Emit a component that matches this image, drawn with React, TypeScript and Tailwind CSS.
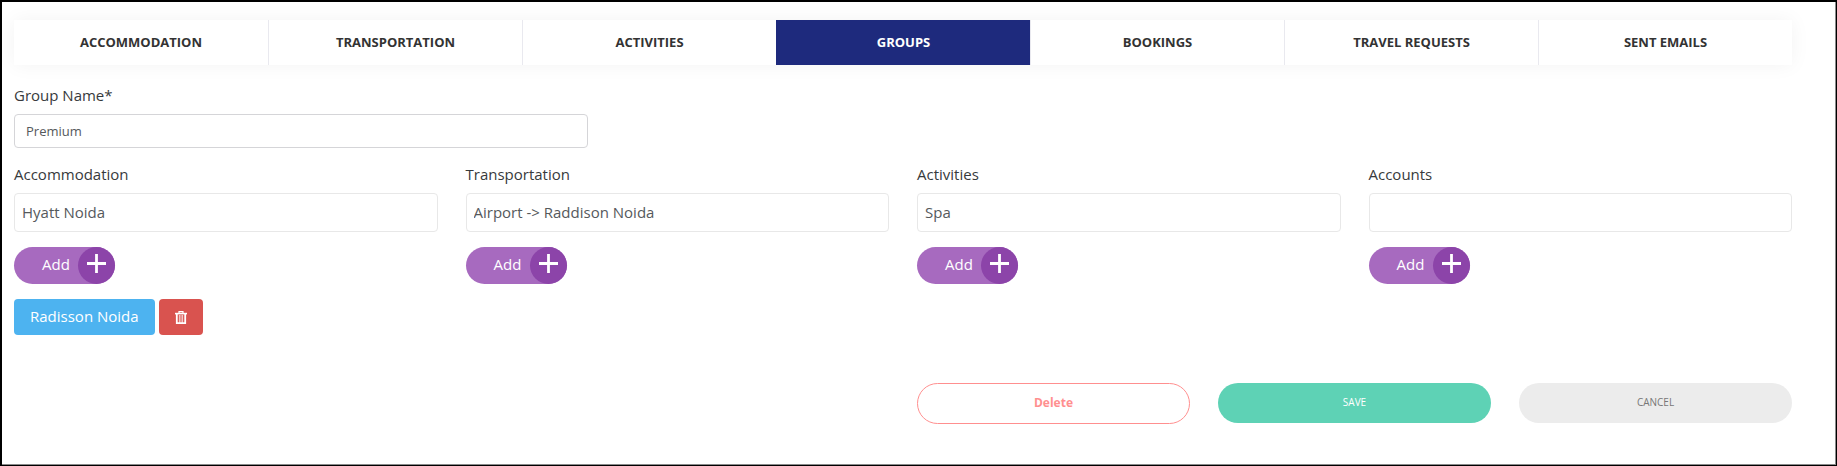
import { useState } from 'react';
import type { ReactNode } from 'react';

const TABS = [
  'Accommodation',
  'Transportation',
  'Activities',
  'Groups',
  'Bookings',
  'Travel Requests',
  'Sent Emails'
];

const FIELDS = [
  { key: 'accommodation', label: 'Accommodation', options: ['Hyatt Noida'], added: ['Radisson Noida'] },
  { key: 'transportation', label: 'Transportation', options: ['Airport -> Raddison Noida'], added: [] },
  { key: 'activities', label: 'Activities', options: ['Spa'], added: [] },
  { key: 'accounts', label: 'Accounts', options: [''], added: [] }
];

function TrashIcon() {
  return (
    <svg viewBox="0 0 12 13" className="h-[13px] w-3" fill="none" stroke="currentColor">
      <path d="M4 2V.7h4V2" strokeWidth="1.2" />
      <path d="M0 2.6h12" strokeWidth="1.6" />
      <path d="M1.8 3v9.1h8.4V3" strokeWidth="1.8" />
      <path d="M4.4 4v8M6 4v8M7.6 4v8" strokeWidth="1" strokeOpacity="0.75" />
    </svg>
  );
}

function AddButton({ onClick }: { onClick?: () => void }) {
  return (
    <button
      type="button"
      onClick={onClick}
      className="flex h-[37px] items-center rounded-full bg-[#a76abf] pl-7 text-[15px] text-white"
    >
      <span className="w-9 pb-0.5 text-left">Add</span>
      <span className="flex size-[37px] justify-center rounded-full bg-[#8c44a9] pt-[7px]">
        <svg viewBox="0 0 19 19" className="size-[19px]" fill="none" stroke="currentColor" strokeWidth="2.8">
          <path d="M9.5 0v19M0 9.5h19" />
        </svg>
      </span>
    </button>
  );
}

function Label({ htmlFor, children }: { htmlFor: string; children: ReactNode }) {
  return (
    <label htmlFor={htmlFor} className="mb-2 block text-[15px] leading-[22px] text-[#373a3c]">
      {children}
    </label>
  );
}

export default function App() {
  const [activeTab, setActiveTab] = useState('Groups');
  const [groupName, setGroupName] = useState('Premium');
  const [added, setAdded] = useState<Record<string, string[]>>(
    Object.fromEntries(FIELDS.map(f => [f.key, f.added]))
  );

  const handleRemove = (key: string, item: string) => {
    setAdded(prev => ({ ...prev, [key]: prev[key].filter(i => i !== item) }));
  };

  return (
    <div className="min-h-screen border border-t-2 border-l-2 border-black bg-white pt-[18px] pr-11 pb-10 pl-3 font-['Open_Sans',sans-serif] shadow-[inset_-1px_-1px_0_#8a8a8a]">
      <nav className="grid grid-cols-7 bg-white shadow-[0_0_20px_rgba(0,0,0,0.05)]">
        {TABS.map(tab => (
          <button
            key={tab}
            type="button"
            onClick={() => setActiveTab(tab)}
            className={`h-[45px] border-l text-[13px] font-bold uppercase first:border-l-0 ${
              tab === activeTab ? 'border-[#1e2a7d] bg-[#1e2a7d] text-white' : 'border-[#e9e9ef] text-[#333333]'
            }`}
          >
            {tab}
          </button>
        ))}
      </nav>

      <form onSubmit={e => e.preventDefault()}>
        <div className="mt-[19px] grid grid-cols-3 gap-7">
          <div>
            <Label htmlFor="group-name">Group Name*</Label>
            <input
              id="group-name"
              type="text"
              value={groupName}
              onChange={e => setGroupName(e.target.value)}
              className="block h-[34px] w-full rounded-[4px] border border-[#d5d5d8] px-[11px] text-[13px] text-[#55595c]"
            />
          </div>
        </div>

        <div className="mt-[15px] grid min-h-[220px] grid-cols-4 gap-7">
          {FIELDS.map(field => (
            <div key={field.key}>
              <Label htmlFor={field.key}>{field.label}</Label>
              <select
                id={field.key}
                className="block h-[39px] w-full appearance-none rounded-[4px] border border-[#e8e8e8] bg-white px-[7px] text-[15px] text-[#55595c]"
              >
                {field.options.map(option => (
                  <option key={option}>{option}</option>
                ))}
              </select>
              <div className="mt-[15px]">
                <AddButton />
              </div>
              {added[field.key].map(item => (
                <div key={item} className="mt-[15px] flex gap-1 text-[15px] text-white">
                  <button type="button" className="h-9 rounded-[4px] bg-[#4db3f0] px-4 pb-0.5">
                    {item}
                  </button>
                  <button
                    type="button"
                    aria-label={`Remove ${item}`}
                    onClick={() => handleRemove(field.key, item)}
                    className="flex h-9 w-11 items-center justify-center rounded-[4px] bg-[#d9534f]"
                  >
                    <TrashIcon />
                  </button>
                </div>
              ))}
            </div>
          ))}
        </div>

        <div className="grid grid-cols-6 items-start gap-7">
          <button type="button" className="col-start-4 h-[41px] rounded-full border border-[#ff8f8f] pb-0.5 text-xs font-bold text-[#ff8f8f]">
            Delete
          </button>
          <button type="submit" className="h-10 rounded-full bg-[#5ed2b5] pb-0.5 text-[10px] text-white uppercase">
            Save
          </button>
          <button type="button" className="h-10 rounded-full bg-[#ececec] pb-0.5 text-[10px] text-[#777777] uppercase">
            Cancel
          </button>
        </div>
      </form>
    </div>
  );
}
